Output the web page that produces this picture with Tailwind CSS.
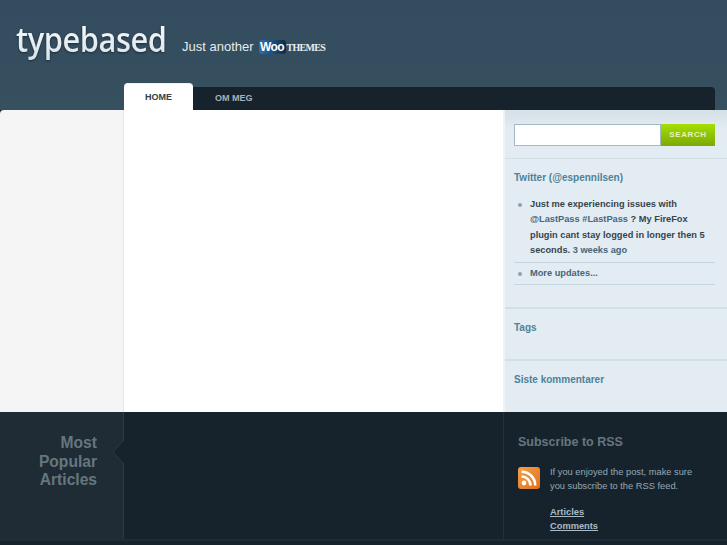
<!DOCTYPE html>
<html lang="en">
<head>
  <meta charset="UTF-8">
  <meta name="viewport" content="width=device-width, initial-scale=1">
  <title>typebased</title>
  <script src="https://cdn.jsdelivr.net/npm/@tailwindcss/browser@4"></script>
</head>
<body class="h-[545px] w-[727px] overflow-hidden bg-[#17232c] font-['Liberation_Sans',Arial,sans-serif]">

<!-- Header -->
<header class="h-[110px] bg-gradient-to-b from-[#334c5f] to-[#36505f] flex flex-col">
  <div class="h-[83px] flex items-start pl-[16px] pt-[17px]">
    <div class="w-[151px] shrink-0">
      <span class="inline-block origin-left scale-x-[0.88] font-['Open_Sans',sans-serif] font-semibold text-[35px] leading-[44px] tracking-[-0.5px] text-transparent bg-clip-text bg-gradient-to-b from-[#ffffff] to-[#d3e2ea] drop-shadow-[0_1px_1px_rgba(0,0,0,0.45)]">typebased</span>
    </div>
    <div class="flex items-center ml-[15px] mt-[20px] h-[20px]">
      <span class="text-[13px] text-[#e3ebef]">Just another</span>
      <span class="relative ml-[5px] h-[14px] w-[27px] rounded-[3px] bg-gradient-to-r from-[#2a6fb0] via-[#1d4f80] to-[#12283f] text-white text-[12px] leading-[14px] font-bold text-center tracking-[-0.5px]">Woo
        <svg class="absolute left-[8px] top-[14px]" width="6" height="3" viewBox="0 0 6 3"><path d="M0 0 L5 0 L3 3 Z" fill="#1d4f80"/></svg>
      </span>
      <span class="ml-[1px] font-['Liberation_Serif',serif] font-bold text-[10px] tracking-[-0.7px] text-[#e8eef1]">THEMES</span>
    </div>
  </div>
  <!-- Nav -->
  <nav class="flex h-[27px] ml-[124px] mr-[12px] items-end">
    <a class="h-[27px] w-[69px] bg-white rounded-t-[4px] text-center text-[9px] font-bold leading-[26px] text-[#33404a] border-t border-[#f0f0f0]">HOME</a>
    <div class="h-[23px] flex-1 bg-[#17232c] rounded-tr-[4px] flex items-center pl-[22px]">
      <a class="text-[9px] font-bold text-[#a7b2b9]">OM MEG</a>
    </div>
  </nav>
</header>

<!-- Content -->
<main class="flex h-[302px]">
  <div class="w-[124px] shrink-0 bg-[#f5f5f5] border-r border-[#e4e4e4] rounded-tl-[4px]"></div>
  <div class="w-[379px] shrink-0 bg-white"></div>
  <aside class="w-[224px] shrink-0 bg-[#e2ecf2] border-l-2 border-[#edf3f6] rounded-tr-[3px] flex flex-col">
    <section class="h-[48px] bg-gradient-to-b from-[#d5e1e7] to-[#e2ecf2] to-[40%] pl-[9px] pr-[12px] pt-[14px]">
      <div class="flex h-[22px]">
        <input class="w-[147px] min-w-0 bg-white border border-[#a3bac6]" type="text">
        <button class="w-[54px] bg-gradient-to-b from-[#a4e000] to-[#7da808] text-[8px] font-bold tracking-[0.6px] text-[#e4f3b8]">SEARCH</button>
      </div>
    </section>
    <section class="h-[149px] border-t border-[#d3dfe5] pl-[9px] pr-[12px] pt-[12px]">
      <h3 class="text-[10px] font-bold leading-[13px] text-[#4f8298]">Twitter (@espennilsen)</h3>
      <ul class="mt-[13px] text-[9.25px] font-bold leading-[15.4px] text-[#37444d]">
        <li class="relative pl-[16px] pr-[4px] pb-[3px] border-b border-[#c6d6df]">
          <span class="absolute left-[4px] top-[6px] size-[4px] rounded-full bg-[#8fa3ad]"></span>
          Just me experiencing issues with <a class="text-[#46677b]">@LastPass</a> <a class="text-[#46677b]">#LastPass</a> ? My FireFox plugin cant stay logged in longer then 5 seconds. <a class="text-[#46677b]">3 weeks ago</a>
        </li>
        <li class="relative pl-[16px] py-[3px] border-b border-[#c6d6df]">
          <span class="absolute left-[4px] top-[9px] size-[4px] rounded-full bg-[#8fa3ad]"></span>
          <a class="text-[#46677b]">More updates...</a>
        </li>
      </ul>
    </section>
    <section class="h-[52px] border-t-2 border-[#d3dfe5] pl-[9px] pt-[12px]">
      <h3 class="text-[10px] font-bold leading-[13px] text-[#4f8298]">Tags</h3>
    </section>
    <section class="flex-1 border-t-2 border-[#d3dfe5] pl-[9px] pt-[12px]">
      <h3 class="text-[10px] font-bold leading-[13px] text-[#4f8298]">Siste kommentarer</h3>
    </section>
  </aside>
</main>

<!-- Footer -->
<footer class="flex h-[129px] border-b-2 border-[#1f2c36]">
  <div class="relative w-[124px] shrink-0 bg-[#1f2c36] border-r border-[#2a3a46] pr-[26px] pt-[22px] text-right">
    <h3 class="text-[15.6px] font-bold leading-[18.5px] text-[#66767f]">Most<br>Popular<br>Articles</h3>
    <svg class="absolute left-[112px] top-[27px]" width="12" height="26" viewBox="0 0 12 26">
      <path d="M12 1 L1 13 L12 25 Z" fill="#17232c"/>
      <path d="M12 1 L1 13 L12 25" fill="none" stroke="#2a3a46"/>
    </svg>
  </div>
  <div class="w-[380px] shrink-0 border-r border-[#24323d]"></div>
  <div class="flex-1 pl-[14px] pt-[22px]">
    <h3 class="text-[12.5px] font-bold leading-[16px] text-[#66767f]">Subscribe to RSS</h3>
    <div class="flex mt-[15px]">
      <svg class="shrink-0 mt-[2px]" width="22" height="22" viewBox="0 0 22 22">
        <defs>
          <linearGradient id="rss" x1="0" y1="0" x2="1" y2="1">
            <stop offset="0" stop-color="#f5a04a"/>
            <stop offset="1" stop-color="#e0701a"/>
          </linearGradient>
        </defs>
        <rect width="22" height="22" rx="3" fill="url(#rss)"/>
        <circle cx="6" cy="16" r="2.4" fill="#fff"/>
        <path d="M3.6 9.5 A9 9 0 0 1 12.5 18.4" fill="none" stroke="#fff" stroke-width="2.6"/>
        <path d="M3.6 4.8 A13.6 13.6 0 0 1 17.2 18.4" fill="none" stroke="#fff" stroke-width="2.6"/>
      </svg>
      <div class="ml-[10px] text-[9.3px] leading-[14px] text-[#95a7b3]">
        <p>If you enjoyed the post, make sure<br>you subscribe to the RSS feed.</p>
        <p class="mt-[12px] font-bold underline text-[#a9bbc6]">Articles</p>
        <p class="font-bold underline text-[#a9bbc6]">Comments</p>
      </div>
    </div>
  </div>
</footer>

</body>
</html>
